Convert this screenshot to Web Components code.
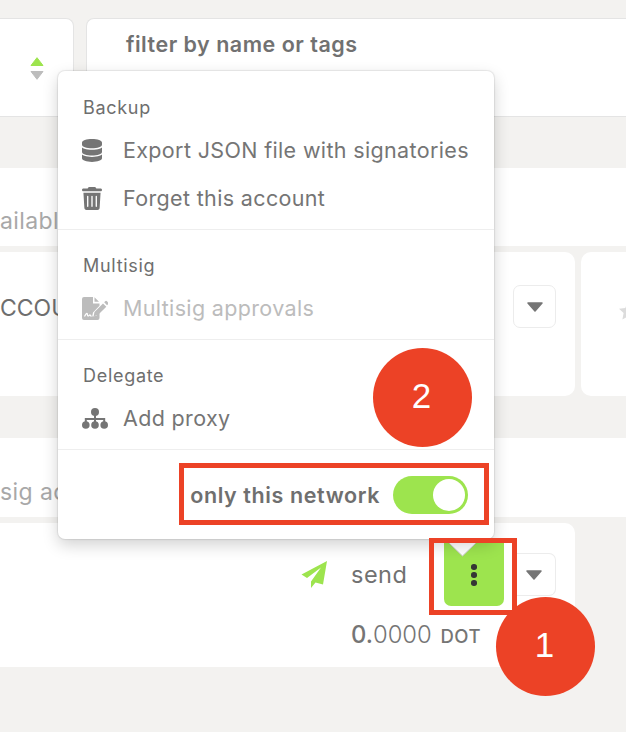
<!DOCTYPE html>
<html>
<head>
<meta charset="utf-8">
<title>Account menu</title>
<style>
    html, body { margin: 0; padding: 0; }
    body {
        width: 626px;
        height: 732px;
        overflow: hidden;
        position: relative;
        background: #f3f2f0;
        font-family: Inter, "Liberation Sans", sans-serif;
        color: #757575;
    }
</style>
</head>
<body>
<top-bar></top-bar>
<strip-row top="51" text="ailable" height="78"></strip-row>
<account-row></account-row>
<strip-row top="42" text="sig ac" height="79" nudge="29"></strip-row>
<send-row></send-row>

<menu-popover>
    <menu-group title="Backup">
        <menu-item icon="database" label="Export JSON file with signatories"></menu-item>
        <menu-item icon="trash" label="Forget this account"></menu-item>
    </menu-group>
    <menu-group title="Multisig">
        <menu-item icon="signature" label="Multisig approvals" disabled></menu-item>
    </menu-group>
    <menu-group title="Delegate">
        <menu-item icon="sitemap" label="Add proxy"></menu-item>
    </menu-group>
    <network-toggle label="only this network"></network-toggle>
</menu-popover>

<mark-box style="left:179px;top:463px;width:310px;height:62px"></mark-box>
<mark-box style="left:429px;top:538px;width:88px;height:77px"></mark-box>
<step-badge style="left:373px;top:348px">2</step-badge>
<step-badge style="left:496px;top:597px">1</step-badge>

<script>
const ICONS = {
    database: `<svg width="20" height="23" viewBox="0 0 448 512"><path fill="currentColor" d="M448 80v48c0 44.2-100.3 80-224 80S0 172.2 0 128V80C0 35.8 100.3 0 224 0S448 35.8 448 80zM393.2 214.7c20.8-7.4 39.9-16.9 54.8-28.6V288c0 44.2-100.3 80-224 80S0 332.2 0 288V186.1c14.9 11.8 34 21.2 54.8 28.6C99.7 230.7 159.5 240 224 240s124.3-9.3 169.2-25.3zM0 346.1c14.9 11.8 34 21.2 54.8 28.6C99.7 390.7 159.5 400 224 400s124.3-9.3 169.2-25.3c20.8-7.4 39.9-16.9 54.8-28.6V432c0 44.2-100.3 80-224 80S0 476.2 0 432V346.1z"/></svg>`,
    trash: `<svg width="20" height="23" viewBox="0 0 448 512"><path fill="currentColor" d="M135.2 17.7L128 32H32C14.3 32 0 46.3 0 64S14.3 96 32 96H416c17.7 0 32-14.3 32-32s-14.3-32-32-32H320l-7.2-14.3C307.4 6.8 296.3 0 284.2 0H163.8c-12.1 0-23.2 6.8-28.6 17.7zM416 128H32L53.2 467c1.6 25.3 22.6 45 47.9 45H346.9c25.3 0 46.3-19.7 47.9-45L416 128z"/><path stroke="#fff" stroke-width="30" stroke-linecap="round" d="M128 208v224M224 208v224M320 208v224"/></svg>`,
    signature: `<svg width="26" height="23" viewBox="0 0 26 23"><path fill="currentColor" d="M2 0h9v6.5h6.5v2.2L11 15.4l-.8 4.1 4.3-.8 3-3V21a2 2 0 0 1-2 2H2a2 2 0 0 1-2-2V2a2 2 0 0 1 2-2zM12.5 0.3L17 4.8h-4.500z"/><path fill="currentColor" d="M21 6.500l3.300 3.200-8.600 8.600-4.100.9.900-4.100zM22.200 5.300l1-1a1.300 1.300 0 0 1 1.800 0l1 1.100a1.300 1.300 0 0 1 0 1.800l-1 1z"/><path fill="none" stroke="#fff" stroke-width="1.200" d="M2.500 19.500c1-2 2-3.500 2.600-3 .6.500 0 2.500 1 2.500s1.400-1.500 2-1 .6 1.200 1.500 1.200"/></svg>`,
    sitemap: `<svg width="26" height="21" viewBox="0 0 26 21"><g fill="currentColor"><circle cx="13" cy="4" r="4"/><circle cx="3.800" cy="17" r="3.800"/><circle cx="13" cy="17" r="3.800"/><circle cx="22.200" cy="17" r="3.800"/></g><path fill="none" stroke="currentColor" stroke-width="2" d="M13 6v8M3.800 14v-3h18.400v3"/></svg>`,
};

const CARET = `<svg width="16" height="10" viewBox="0 0 16 10"><path fill="#757575" stroke="#757575" stroke-width="1.500" stroke-linejoin="round" d="M1 1h14L8 9z"/></svg>`;

class BaseElement extends HTMLElement {
    constructor() {
        super();
        this.attachShadow({ mode: 'open' });
    }
}

class TopBar extends BaseElement {
    connectedCallback() {
        this.shadowRoot.innerHTML = `
            <style>
                :host { display: flex; gap: 12px; padding-top: 18px; height: 99px; }
                .card {
                    background: #fff;
                    border: 1px solid #e4e4e4;
                    box-sizing: border-box;
                    border-radius: 0 8px 0 0;
                    height: 99px;
                }
                .sort {
                    width: 74px;
                    flex: none;
                    border-left: 0;
                    display: flex;
                    flex-direction: column;
                    align-items: flex-end;
                    gap: 5px;
                    padding: 38px 29px 0 0;
                }
                .filter {
                    flex: 1;
                    border-right: 0;
                    border-radius: 8px 0 0 0;
                    padding: 11px 0 0 39px;
                    font-size: 21.500px;
                    letter-spacing: .5px;
                    font-weight: 600;
                    line-height: 28px;
                    color: #717171;
                }
                svg { display: block; }
            </style>
            <div class="card sort">
                <svg width="14" height="9" viewBox="0 0 14 9"><path fill="#9de44e" stroke="#9de44e" stroke-linejoin="round" d="M1 8.500h12L7 .7z"/></svg>
                <svg width="14" height="9" viewBox="0 0 14 9"><path fill="#bdbdbd" stroke="#bdbdbd" stroke-linejoin="round" d="M1 .5h12L7 8.300z"/></svg>
            </div>
            <div class="card filter">filter by name or tags</div>
        `;
    }
}

class StripRow extends BaseElement {
    connectedCallback() {
        const top = this.getAttribute('top');
        const height = this.getAttribute('height');
        const nudge = this.getAttribute('nudge') || 27;
        this.shadowRoot.innerHTML = `
            <style>
                :host { display: block; padding-top: ${top}px; }
                div {
                    height: ${height}px;
                    box-sizing: border-box;
                    background: #fff;
                    display: flex;
                    align-items: center;
                    padding-top: ${nudge}px;
                    font-size: 23px;
                    letter-spacing: .4px;
                    color: #a8a8a8;
                }
            </style>
            <div>${this.getAttribute('text')}</div>
        `;
    }
}

class AccountRow extends BaseElement {
    connectedCallback() {
        this.shadowRoot.innerHTML = `
            <style>
                :host { display: flex; gap: 6px; margin-top: 6px; height: 144px; }
                .card {
                    background: #fff;
                    border-radius: 0 10px 10px 0;
                    width: 575px;
                    flex: none;
                    box-sizing: border-box;
                    display: flex;
                    justify-content: space-between;
                    align-items: flex-start;
                    padding: 33px 19px 0 0;
                }
                .card2 {
                    flex: 1;
                    background: #fff;
                    border-radius: 10px 0 0 10px;
                    padding: 50px 0 0 38px;
                }
                .name { font-size: 23px; line-height: 46px; color: #6e6e6e; }
                .drop {
                    width: 43px; height: 43px;
                    box-sizing: border-box;
                    border: 1px solid #ececec;
                    border-radius: 7px;
                    display: flex; align-items: center; justify-content: center;
                }
                svg { display: block; }
            </style>
            <div class="card">
                <span class="name">CCOU</span>
                <div class="drop">${CARET}</div>
            </div>
            <div class="card2">
                <svg width="18" height="18" viewBox="0 0 18 18"><path fill="#dcdcdc" d="M9 0l2.700 5.900 6.300.8-4.600 4.400 1.200 6.400L9 14.300l-5.600 3.200 1.200-6.400L0 6.700l6.300-.8z"/></svg>
            </div>
        `;
    }
}

class SendRow extends BaseElement {
    connectedCallback() {
        this.shadowRoot.innerHTML = `
            <style>
                :host { display: block; margin-top: 6px; width: 575px; height: 144px; }
                .card {
                    background: #fff;
                    border-radius: 0 10px 10px 0;
                    height: 144px;
                    box-sizing: border-box;
                    padding: 20px 19px 0 300px;
                    display: grid;
                    grid-template-columns: 28px 1fr;
                    column-gap: 23px;
                    grid-template-rows: 63px auto;
                }
                .plane { align-self: center; display: block; }
                .top { display: flex; align-items: center; }
                .send { font-size: 23.500px; letter-spacing: .5px; color: #717171; width: 93px; }
                .more {
                    width: 60px; height: 63px;
                    flex: none;
                    background: #9de44e;
                    border-radius: 0 0 7px 7px;
                    position: relative;
                    display: flex; flex-direction: column;
                    align-items: center; justify-content: center;
                    gap: 2.500px;
                    padding-top: 1px;
                    box-sizing: border-box;
                }
                .more i { width: 5.500px; height: 5.500px; border-radius: 50%; background: #353535; display: block; }
                .notch { position: absolute; left: 3px; top: 0; display: block; }
                .drop {
                    width: 39px; height: 43px;
                    flex: none;
                    margin-left: 13px;
                    box-sizing: border-box;
                    border: 1px solid #ececec;
                    border-left: 0;
                    border-radius: 0 7px 7px 0;
                    display: flex; align-items: center; justify-content: center;
                }
                .drop svg { margin-left: -4px; display: block; }
                .balance {
                    grid-column: 2;
                    padding-top: 15px;
                    font-size: 23.800px;
                    line-height: 28px;
                    color: #757575;
                    font-weight: 300;
                    white-space: nowrap;
                }
                .balance b { font-weight: 500; }
                .balance small { font-size: 18.500px; font-weight: 500; margin-left: 2px; letter-spacing: .5px; }
            </style>
            <div class="card">
                <svg class="plane" width="28" height="27" viewBox="0 0 28 27">
                    <path fill="#9de44e" d="M27 0L1.500 13.500l5.500 3.500 14-10.500-10 14V27l4.500-5.500 7.500 2z"/>
                </svg>
                <div class="top">
                    <span class="send">send</span>
                    <div class="more">
                        <svg class="notch" width="30" height="14" viewBox="0 0 30 14"><path fill="#fff" stroke="#c7c7c7" stroke-width="1" d="M2 0l13.500 13L29 0"/></svg>
                        <i></i><i></i><i></i>
                    </div>
                    <div class="drop">${CARET}</div>
                </div>
                <div class="balance"><b>0.</b>0000 <small>DOT</small></div>
            </div>
        `;
    }
}

class MenuPopover extends BaseElement {
    connectedCallback() {
        this.shadowRoot.innerHTML = `
            <style>
                :host {
                    position: absolute;
                    left: 58px; top: 71px;
                    width: 436px; height: 468px;
                    box-sizing: border-box;
                    padding-top: 1px;
                    background: #fff;
                    border-radius: 7px;
                    box-shadow: 0 0 1px 1px rgba(0,0,0,.08), 0 6px 16px rgba(0,0,0,.18);
                    display: flex;
                    flex-direction: column;
                }
            </style>
            <slot></slot>
        `;
    }
}

class MenuGroup extends BaseElement {
    connectedCallback() {
        this.shadowRoot.innerHTML = `
            <style>
                :host {
                    display: flex;
                    flex-direction: column;
                    padding: 24px 0 7px 24px;
                    border-bottom: 1px solid #eeeeee;
                }
                .title { font-size: 18px; letter-spacing: .7px; line-height: 24px; color: #6e6e6e; margin: 0 0 6px 1px; }
            </style>
            <div class="title">${this.getAttribute('title')}</div>
            <slot></slot>
        `;
    }
}

class MenuItem extends BaseElement {
    connectedCallback() {
        const disabled = this.hasAttribute('disabled');
        this.shadowRoot.innerHTML = `
            <style>
                :host {
                    display: flex;
                    align-items: center;
                    height: 48px;
                    color: ${disabled ? '#bcbcbc' : '#757575'};
                    font-size: 21.500px;
                    letter-spacing: .35px;
                    white-space: nowrap;
                }
                .icon { width: 41px; flex: none; display: flex; }
                svg { display: block; }
            </style>
            <span class="icon">${ICONS[this.getAttribute('icon')]}</span>
            <span>${this.getAttribute('label')}</span>
        `;
    }
}

class NetworkToggle extends BaseElement {
    connectedCallback() {
        this.shadowRoot.innerHTML = `
            <style>
                :host {
                    flex: 1;
                    display: flex;
                    align-items: center;
                    justify-content: flex-end;
                    gap: 13px;
                    padding: 0 26px 0 0;
                    font-size: 21.500px;
                    letter-spacing: .6px;
                    font-weight: 600;
                    color: #6f6f6f;
                    white-space: nowrap;
                }
                .track {
                    width: 75px; height: 38px;
                    border-radius: 19px;
                    background: #9de44e;
                    display: flex;
                    justify-content: flex-end;
                    align-items: center;
                    padding: 0 3px;
                    box-sizing: border-box;
                }
                .knob { width: 32px; height: 32px; border-radius: 50%; background: #fff; }
            </style>
            <span>${this.getAttribute('label')}</span>
            <div class="track"><div class="knob"></div></div>
        `;
    }
}

class MarkBox extends BaseElement {
    connectedCallback() {
        this.shadowRoot.innerHTML = `
            <style>
                :host {
                    position: absolute;
                    box-sizing: border-box;
                    border: 5px solid #ec4226;
                    display: block;
                }
            </style>
        `;
    }
}

class StepBadge extends BaseElement {
    connectedCallback() {
        this.shadowRoot.innerHTML = `
            <style>
                :host {
                    position: absolute;
                    width: 99px; height: 99px;
                    box-sizing: border-box;
                    padding: 0 2px 3px 0;
                    border-radius: 50%;
                    background: #ec4226;
                    color: #fff;
                    display: flex;
                    align-items: center;
                    justify-content: center;
                    font-family: "Liberation Sans", sans-serif;
                    font-size: 35px;
                }
            </style>
            <slot></slot>
        `;
    }
}

customElements.define('top-bar', TopBar);
customElements.define('strip-row', StripRow);
customElements.define('account-row', AccountRow);
customElements.define('send-row', SendRow);
customElements.define('menu-popover', MenuPopover);
customElements.define('menu-group', MenuGroup);
customElements.define('menu-item', MenuItem);
customElements.define('network-toggle', NetworkToggle);
customElements.define('mark-box', MarkBox);
customElements.define('step-badge', StepBadge);
</script>
</body>
</html>
